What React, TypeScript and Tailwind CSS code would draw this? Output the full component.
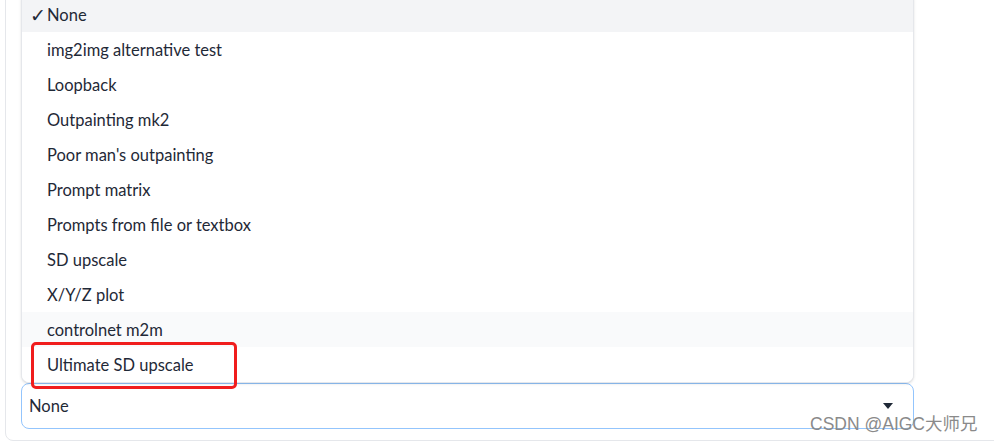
import React from "react";

const items = [
  "img2img alternative test",
  "Loopback",
  "Outpainting mk2",
  "Poor man's outpainting",
  "Prompt matrix",
  "Prompts from file or textbox",
  "SD upscale",
  "X/Y/Z plot",
  "controlnet m2m",
  "Ultimate SD upscale",
];

export default function App() {
  return (
    <div
      className="relative h-[443px] w-[994px] overflow-hidden bg-white text-[16.5px] text-[#1f2937]"
      style={{ fontFamily: "Lato, 'Noto Sans', sans-serif" }}
    >
      <div className="ml-[5px] mt-[-10px] flex h-[451px] w-[1010px] flex-col justify-end rounded-lg border border-[#e5e7eb] pb-[11px] pl-[15px]">
        <div className="relative w-[893px]">
          {/* dropdown list overlay */}
          <div className="absolute bottom-full left-0 w-[893px] overflow-hidden rounded-b-lg border border-t-0 border-[#e5e7eb] bg-white shadow-sm">
            <div className="flex h-[35px] items-center bg-[#f3f4f6] pl-[8px] pt-[2px]">
              <span
                className="w-[17px] text-[19px] leading-none"
                style={{ fontFamily: "'Noto Sans', 'DejaVu Sans', sans-serif" }}
              >
                ✓
              </span>
              <span>None</span>
            </div>
            {items.map((it) => (
              <div
                key={it}
                className={
                  "flex h-[35px] items-center pl-[25px] pt-[2px] " +
                  (it === "controlnet m2m" ? "bg-[#f9fafb]" : "bg-white")
                }
              >
                {it}
              </div>
            ))}
          </div>
          {/* select */}
          <div className="flex h-[46px] items-center justify-between rounded-lg border border-[#93c5fd] bg-white pl-[7px] pr-[20px]">
            <span className="pt-[1px]">None</span>
            <svg width="10" height="6" viewBox="0 0 10 6">
              <path d="M0 0 L10 0 L5 6 Z" fill="#1f2937" />
            </svg>
          </div>
        </div>
      </div>
      {/* annotation */}
      <div className="absolute left-[31px] top-[342px] h-[47px] w-[206px] rounded-[5px] border-[3px] border-[#f01d1d]" />
      <div
        className="absolute left-[810px] top-[413px] text-[17.5px] leading-[22px] text-[#8a8a8a]"
        style={{ fontFamily: "'Liberation Sans', 'Noto Sans CJK SC', sans-serif" }}
      >
        CSDN @AIGC大师兄
      </div>
    </div>
  );
}
